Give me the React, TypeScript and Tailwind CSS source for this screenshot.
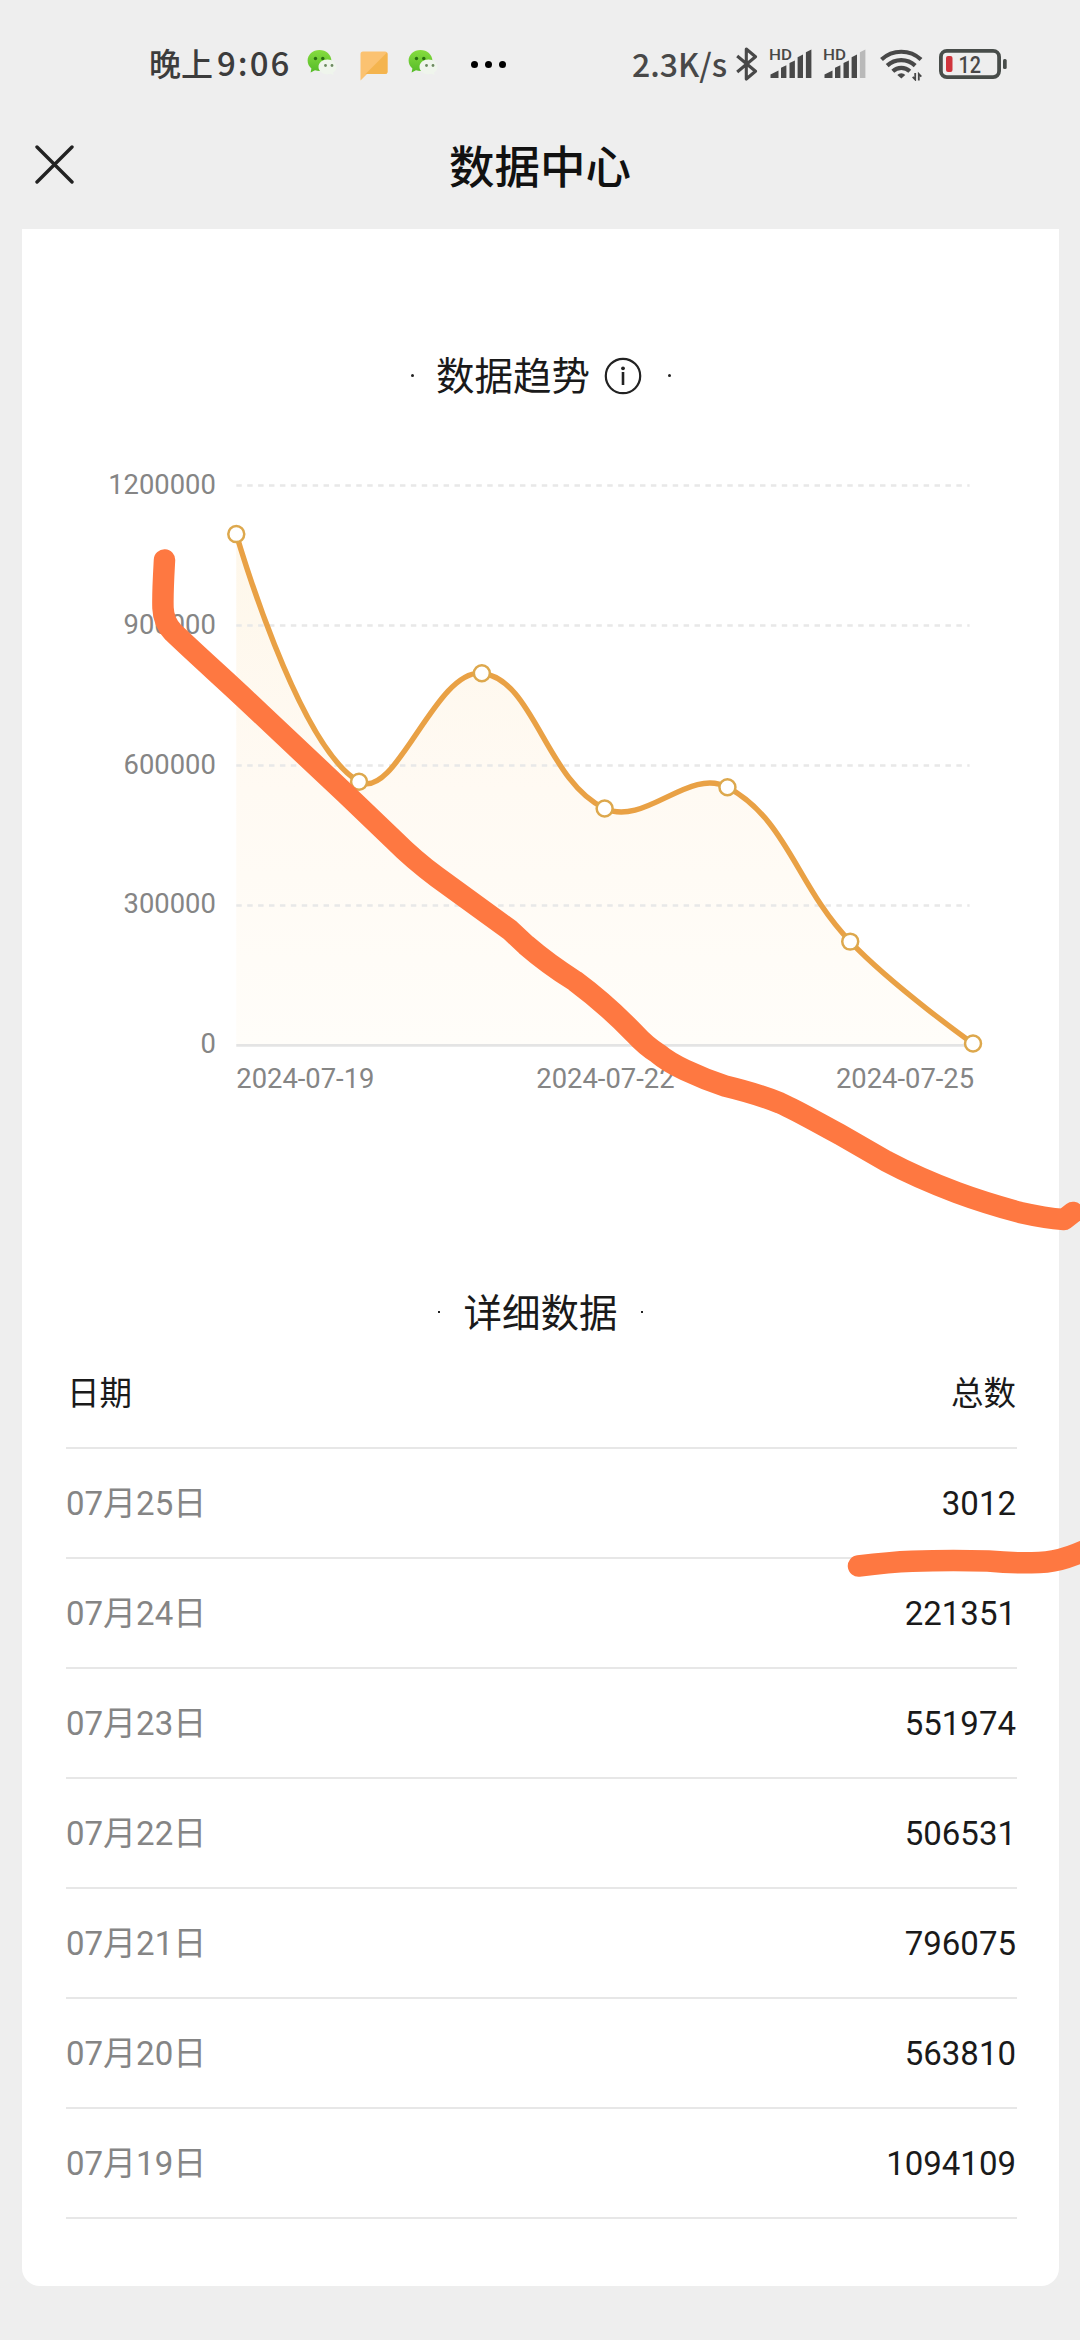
const CJK = "font-['Roboto','Noto_Sans_CJK_SC',sans-serif]";

const AXIS_BOTTOM = 1046;
const STEP = 140.2;
const series = [1094109, 563810, 796075, 506531, 551974, 221351, 3012];

const rows = [
  { date: "07月25日", total: "3012" },
  { date: "07月24日", total: "221351" },
  { date: "07月23日", total: "551974" },
  { date: "07月22日", total: "506531" },
  { date: "07月21日", total: "796075" },
  { date: "07月20日", total: "563810" },
  { date: "07月19日", total: "1094109" },
];

type Pt = [number, number];

const points: Pt[] = series.map((v, i) => [
  236 + i * 122.9,
  AXIS_BOTTOM - 0.5 - (v / 300000) * STEP,
]);

/* Cubic spline whose inner handles are 0.4 of the neighbour vector, split by segment length. */
function smoothPath(pts: Pt[]): string {
  const dist = (a: Pt, b: Pt) => Math.hypot(a[0] - b[0], a[1] - b[1]);
  const handles = pts.map((p, i) => {
    const prev = pts[i - 1];
    const next = pts[i + 1];
    if (!prev || !next) return { before: p, after: p };
    const vx = (next[0] - prev[0]) * 0.4;
    const vy = (next[1] - prev[1]) * 0.4;
    const d0 = dist(p, prev);
    const d1 = dist(p, next);
    const a = d0 / (d0 + d1);
    const b = d1 / (d0 + d1);
    return { before: [p[0] - vx * a, p[1] - vy * a], after: [p[0] + vx * b, p[1] + vy * b] };
  });
  let d = `M${pts[0][0]} ${pts[0][1]}`;
  for (let i = 1; i < pts.length; i++) {
    d += ` C${handles[i - 1].after.join(" ")} ${handles[i].before.join(" ")} ${pts[i].join(" ")}`;
  }
  return d;
}

function WeChatIcon() {
  return (
    <svg width="30" height="28" viewBox="0 1 30 28" className="shrink-0">
      <defs>
        <linearGradient id="wx" x1="0" y1="0" x2="0" y2="1">
          <stop offset="0" stopColor="#86dc3f" />
          <stop offset="1" stopColor="#55bb28" />
        </linearGradient>
      </defs>
      <path d="M12.500 1C5.800 1 .6 5.700 .6 11.600c0 3.300 1.400 5.900 3.800 7.900L3.600 23.600l4.400-2.300c1.400.4 3 .6 4.500.6 6.600 0 11.900-4.500 11.900-10.300S19.100 1 12.500 1z" fill="url(#wx)" />
      <circle cx="8.500" cy="9.500" r="1.700" fill="#2a7010" />
      <circle cx="15.800" cy="9.500" r="1.700" fill="#2a7010" />
      <path d="M20.500 10.600c-5 0-9 3.200-9 7.300s4 7.300 9 7.300c1.200 0 2.200-.2 3.200-.5l3 1.600-.7-2.800c2.100-1.300 3.500-3.300 3.500-5.600 0-4.100-4-7.300-9-7.300z" fill="#eff5ec" />
      <circle cx="18.500" cy="16.500" r="1.400" fill="#6c8a60" />
      <circle cx="25" cy="16.500" r="1.400" fill="#6c8a60" />
    </svg>
  );
}

function MessageIcon() {
  return (
    <svg width="28" height="30" viewBox="0 0 28 30" className="shrink-0">
      <path d="M3 .5h22a2.500 2.500 0 0 1 2.500 2.500v17.500a2.500 2.500 0 0 1-2.500 2.500H7L.5 29.500V3A2.500 2.500 0 0 1 3 .5z" fill="#fbc271" />
      <path d="M27 1.500 5.500 23H25a2.500 2.500 0 0 0 2.500-2.500V3z" fill="#f4b44e" />
    </svg>
  );
}

function BluetoothIcon() {
  return (
    <svg width="22" height="34" viewBox="0 0 22 34" className="shrink-0" fill="none" stroke="#484848" strokeWidth="3.100" strokeLinejoin="round">
      <path d="M1.200 9 19.500 24.300 10.300 32V2l9.200 7.700L1.200 25" />
    </svg>
  );
}

function SignalIcon({ weak = false }: { weak?: boolean }) {
  return (
    <svg width="44" height="38" viewBox="0 -3 44 38" className="shrink-0" fill="#484848">
      <text x="0" y="11.500" fontSize="15.500" fontFamily="Roboto, sans-serif" fontWeight="500" textLength="23" lengthAdjust="spacingAndGlyphs">HD</text>
      <path d="M1.500 30v-3.500l8-4V30z" />
      <path d="M12 30V19.800l5.400-2.600V30z" />
      <path d="M20.500 30V15l5.400-2.600V30z" />
      <path d="M28.600 30V9.200l5.400-2.600V30z" />
      <path d="M36.900 30V4.200l5.500-2.600V30z" fill={weak ? "#b9b9b9" : "#484848"} />
    </svg>
  );
}

function WifiIcon() {
  return (
    <svg width="44" height="34" viewBox="0 0 44 34" className="shrink-0" fill="none" stroke="#484848" strokeWidth="4.200">
      <path d="M1.500 12.500a29 29 0 0 1 39.500 0" />
      <path d="M7.200 18.600a20.500 20.500 0 0 1 28 0" />
      <path d="M12.800 24.300a12.500 12.500 0 0 1 17 0" />
      <path d="M21.300 31.500l-4-3.600a5.500 5.500 0 0 1 8 0z" fill="#484848" stroke="none" />
      <path d="M35.200 26v6.500l-2.500-2.700M38.800 33.500V27l2.500 2.700" strokeWidth="1.800" />
    </svg>
  );
}

function BatteryIcon() {
  return (
    <svg width="68" height="30" viewBox="0 0 68 30" className="shrink-0">
      <rect x="1.900" y="1.900" width="58.200" height="26.200" rx="6" fill="none" stroke="#484d4a" strokeWidth="3.800" />
      <rect x="64" y="10" width="3.700" height="10" rx="1.500" fill="#484d4a" />
      <rect x="7" y="7" width="6.500" height="16" rx="2" fill="#d0343c" />
      <text x="19.500" y="23.700" fontSize="23" fontFamily="Roboto, sans-serif" fontWeight="500" fill="#484848" textLength="22.500" lengthAdjust="spacingAndGlyphs">12</text>
    </svg>
  );
}

function StatusBar() {
  return (
    <div className="flex h-[128px] items-center pl-[149px] pr-[73px]">
      <span className="-mt-[3px] w-[158px] whitespace-nowrap font-['Noto_Sans_CJK_SC',sans-serif] text-[32px] font-medium leading-none text-[#3c3c3c]">
        晚上<span className="ml-[4px] text-[33px] tracking-[2px]">9:06</span>
      </span>
      <WeChatIcon />
      <div className="ml-[23px] mt-[3px]"><MessageIcon /></div>
      <div className="ml-[20px]"><WeChatIcon /></div>
      <div className="ml-[33px] flex gap-[7px]">
        <i className="size-[7px] rounded-full bg-black" />
        <i className="size-[7px] rounded-full bg-black" />
        <i className="size-[7px] rounded-full bg-black" />
      </div>
      <div className="ml-auto flex items-center">
        <span className="-mt-[3px] w-[104px] whitespace-nowrap font-['Noto_Sans_CJK_SC',sans-serif] text-[32px] font-medium leading-none text-[#484848]">
          2.3K/s
        </span>
        <BluetoothIcon />
        <div className="ml-[11px]"><SignalIcon /></div>
        <div className="ml-[10px]"><SignalIcon weak /></div>
        <div className="ml-[13px]"><WifiIcon /></div>
        <div className="ml-[15px]"><BatteryIcon /></div>
      </div>
    </div>
  );
}

function TitleBar() {
  return (
    <header className="grid h-[101px] grid-cols-[200px_1fr_200px] pt-[11px]">
      <svg width="39" height="39" viewBox="0 0 39 39" className="ml-[35px] mt-[6px]" stroke="#222" strokeWidth="3.400" strokeLinecap="round">
        <path d="M2 2l35 35M37 2 2 37" />
      </svg>
      <h1 className="text-center font-['Noto_Sans_CJK_SC',sans-serif] text-[45.500px] font-medium leading-[50px] text-[#111]">数据中心</h1>
    </header>
  );
}

function TrendChart() {
  const line = smoothPath(points);
  return (
    <svg width="1037" height="670" viewBox="22 450 1037 670" className="block" fontFamily="Roboto, sans-serif" fontSize="27.400" fill="#858585">
      <defs>
        <linearGradient id="area" x1="0" y1="0" x2="0" y2="1">
          <stop offset="0" stopColor="#fef7ea" />
          <stop offset="0.500" stopColor="#fffaf3" />
          <stop offset="1" stopColor="#fffdf9" />
        </linearGradient>
      </defs>
      <path d={`${line} L${points[6][0]} ${AXIS_BOTTOM} L236 ${AXIS_BOTTOM} Z`} fill="url(#area)" />
      {[1200000, 900000, 600000, 300000].map((v, i) => (
        <path key={v} d={`M236 ${485.5 + i * 140.1}H970`} stroke="#e8e8e8" strokeWidth="2.500" strokeDasharray="5.500 5.420" />
      ))}
      <path d={`M236 ${AXIS_BOTTOM}H974`} stroke="#e4e4e4" strokeWidth="2.800" />
      {[1200000, 900000, 600000, 300000, 0].map((v, i) => (
        <text key={v} x="215.500" y={493.8 + i * 140} textAnchor="end">{v}</text>
      ))}
      <text x="236" y="1088.800">2024-07-19</text>
      <text x="605.500" y="1088.800" textAnchor="middle">2024-07-22</text>
      <text x="974.500" y="1088.800" textAnchor="end">2024-07-25</text>
      <path d={line} fill="none" stroke="#e9a145" strokeWidth="5.400" />
      {points.map(([x, y]) => (
        <circle key={x} cx={x} cy={y} r="8" fill="#fff" stroke="#dda84d" strokeWidth="2.500" />
      ))}
    </svg>
  );
}

function InfoIcon() {
  return (
    <svg width="38" height="38" viewBox="0 0 38 38" fill="none" stroke="#222">
      <circle cx="19" cy="19" r="17.200" strokeWidth="2.200" />
      <path d="M19 15v13" strokeWidth="2.600" />
      <circle cx="19" cy="11.300" r="1.900" fill="#222" stroke="none" />
    </svg>
  );
}

/* Finger-drawn marker strokes laid over the page. */
function MarkerStrokes() {
  return (
    <svg width="1080" height="2340" viewBox="0 0 1080 2340" className="pointer-events-none absolute left-0 top-0" fill="none" stroke="#fe7841" strokeWidth="21.500" strokeLinecap="round" strokeLinejoin="round">
      <path d="M164.500 560C163.500 578 162.500 594 163 608Q163.500 622 173 632C200 658 232 686 260 713L346 794L394 840Q414 860 437 877L510 930L526 945Q548 964 575 981Q606 1004 635 1034Q646 1046 658 1053.500Q668 1062 685 1070Q704 1079 725 1086Q758 1094 780 1103C800 1112 820 1124 840 1134.500L886 1161Q918 1178 957 1192.600Q985 1203 1020 1212.400Q1045 1218 1064 1219.500L1073 1212.500" />
      <path d="M858.500 1566Q890 1562 912 1561.200Q950 1560 988 1561Q1010 1563 1029 1562.700Q1046 1563 1060 1559.500Q1070 1557 1084 1551" />
    </svg>
  );
}

export default function App() {
  return (
    <div className={`relative h-[2340px] w-[1080px] overflow-hidden bg-[#eeeeee] ${CJK}`}>
      <StatusBar />
      <TitleBar />
      <main className="ml-[22px] flex h-[2057px] w-[1037px] flex-col rounded-b-[18px] bg-white text-[#1a1a1a]">
        <div className="flex h-[221px] items-center justify-center pl-px pt-[73px]">
          <i className="size-[3px] rounded-full bg-[#222]" />
          <h2 className="-mt-[5px] ml-[22px] font-['Noto_Sans_CJK_SC',sans-serif] text-[38.500px] leading-none">数据趋势</h2>
          <div className="ml-[14px] mt-px"><InfoIcon /></div>
          <i className="ml-[26px] size-[3px] rounded-full bg-[#222]" />
        </div>
        <TrendChart />
        <div className="flex h-[221px] items-end justify-center pb-[12px]">
          <div className="flex items-center">
            <i className="size-[2px] bg-[#222]" />
            <h2 className="-mt-[4px] mx-[23px] font-['Noto_Sans_CJK_SC',sans-serif] text-[38.500px] leading-[36px]">详细数据</h2>
            <i className="size-[2px] bg-[#222]" />
          </div>
        </div>
        <div className="ml-[44px] mr-[42px] mt-auto flex h-[109px] items-center justify-between border-b-2 border-[#e7e7e7] pb-[5px] pl-px pr-px font-['Noto_Sans_CJK_SC',sans-serif] text-[32.500px] leading-none">
          <span>日期</span>
          <span>总数</span>
        </div>
        <ul className="mb-[67px] ml-[44px] mr-[42px] text-[33px] leading-none">
          {rows.map((r) => (
            <li key={r.date} className="flex h-[110px] items-center justify-between border-b-2 border-[#e7e7e7]">
              <span className="text-[#858585]">{r.date}</span>
              <span className="pr-px">{r.total}</span>
            </li>
          ))}
        </ul>
      </main>
      <MarkerStrokes />
    </div>
  );
}
